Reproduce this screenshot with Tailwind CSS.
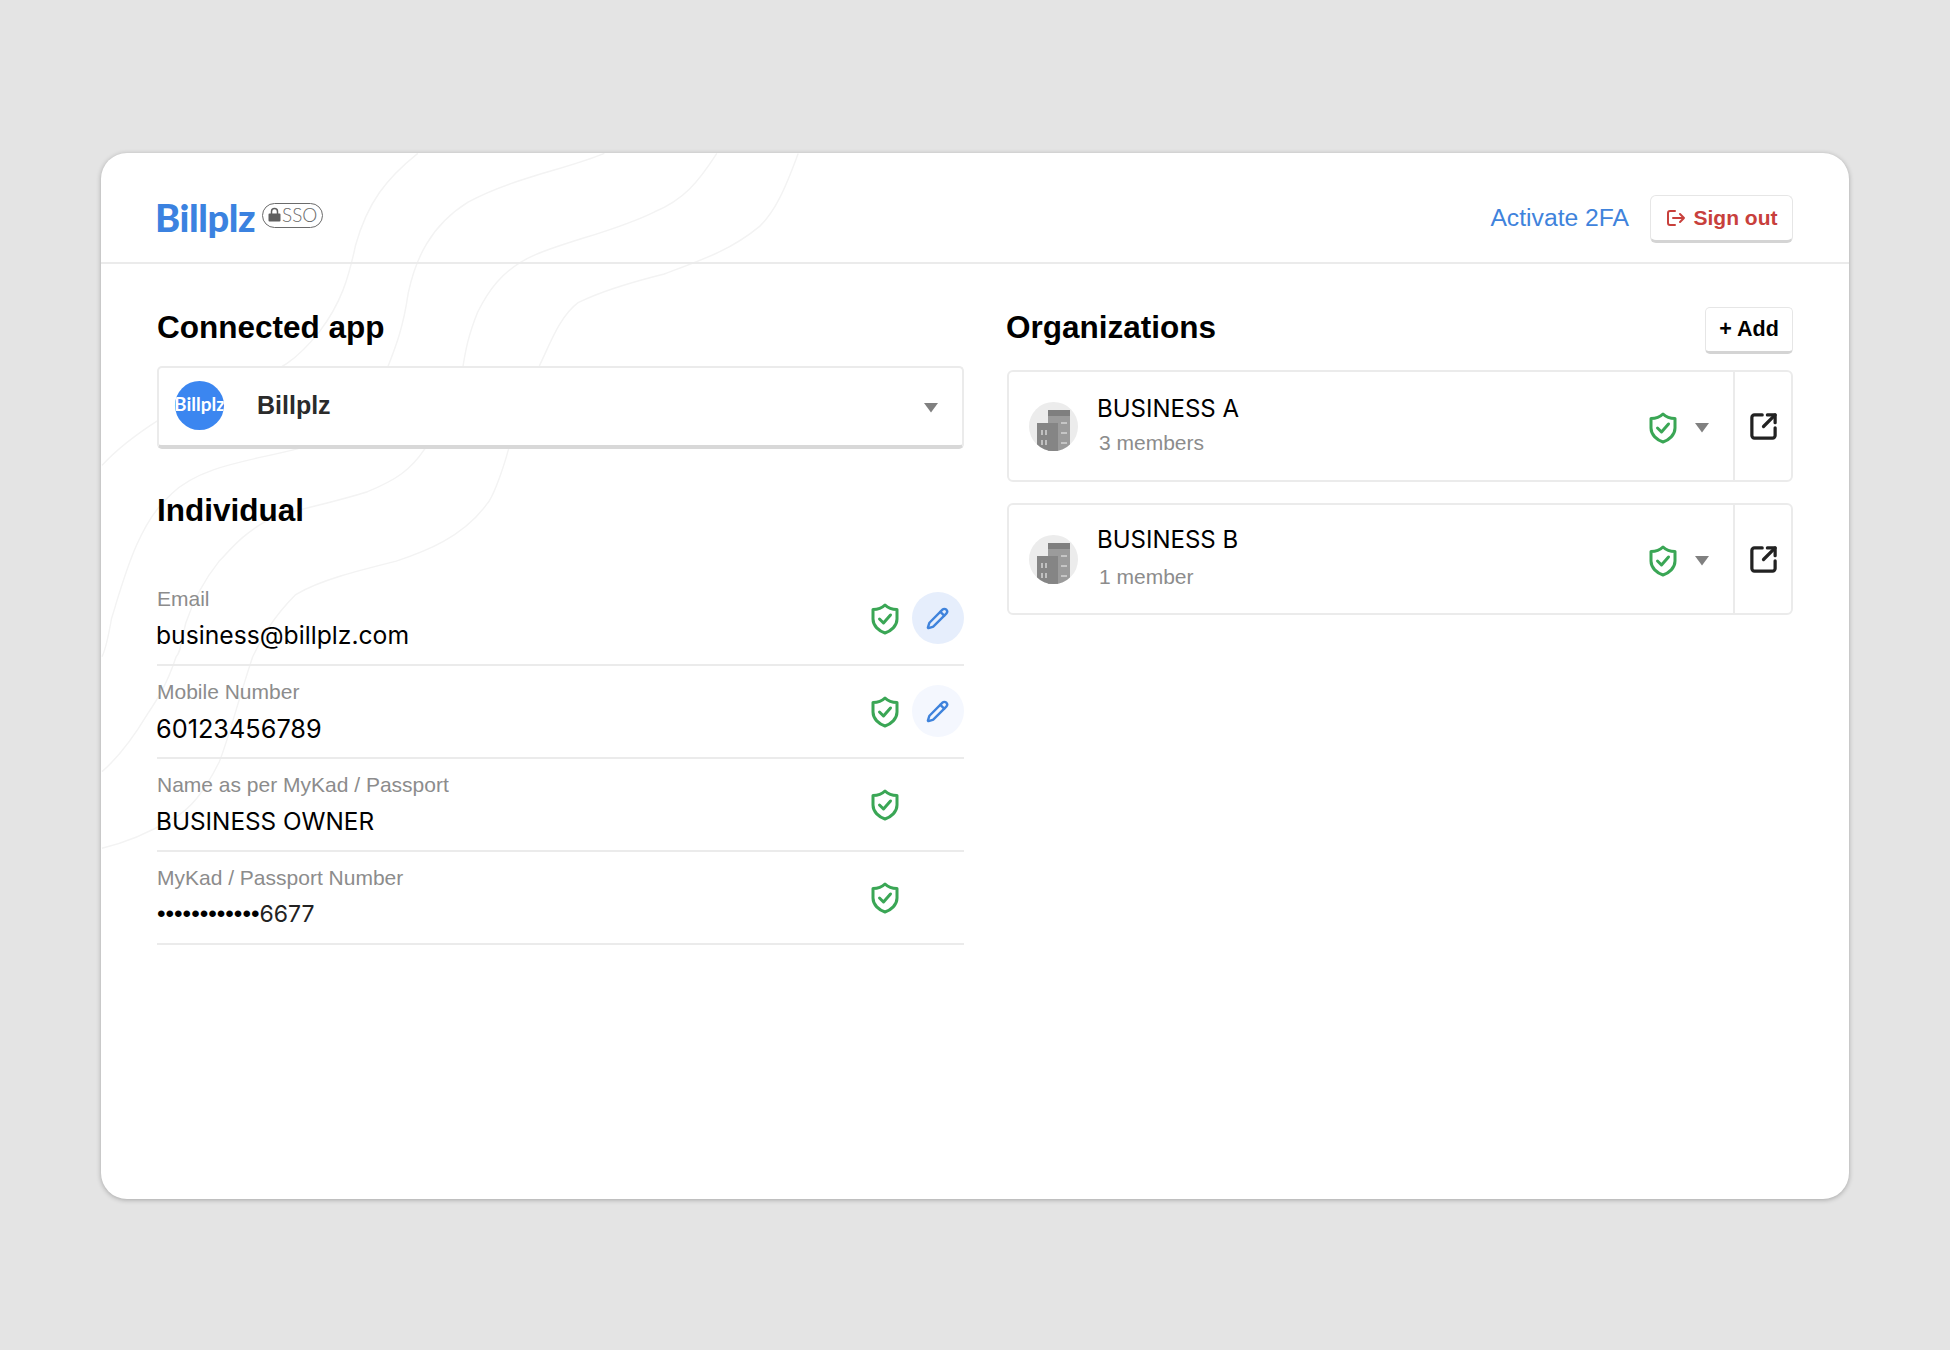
<!DOCTYPE html>
<html lang="en">
  <head>
    <meta charset="UTF-8" />
    <title>Billplz SSO</title>
    <script src="https://cdn.jsdelivr.net/npm/@tailwindcss/browser@4"></script>
  </head>
  <body class="bg-[#e4e4e4] h-[1350px] overflow-hidden font-['Liberation_Sans',Arial,sans-serif] text-black">
    <div class="pt-[153px] pl-[101px]">
      <div class="relative w-[1748px] h-[1046px] bg-white rounded-[26px] overflow-hidden shadow-[0_1px_5px_rgba(0,0,0,0.28)]">
        <!-- faint wavy background -->
        <svg class="absolute left-0 top-0" width="1748" height="1046" viewBox="0 0 1748 1046" fill="none">
          <g transform="translate(-11 -13) scale(0.4785)" stroke="#f3f3f3" stroke-width="3">
            <path d="M685 28C620 80 580 130 555 220C540 290 525 340 480 400C440 450 400 490 300 510C200 540 80 620 25 680" />
            <path d="M1075 28C1000 60 880 80 790 130C710 180 680 250 665 320C655 390 640 430 620 480C560 590 500 630 435 645C340 670 230 680 170 740C100 800 70 920 45 1000C38 1040 30 1070 25 1080" />
            <path d="M1310 28C1270 90 1240 125 1180 150C1100 190 1000 210 930 240C860 270 830 320 810 360C790 410 785 440 780 470C770 560 740 640 700 645C670 690 640 710 580 735C500 760 440 770 380 790C320 820 290 860 270 880C230 930 210 980 200 1010C190 1050 190 1070 180 1080C160 1140 140 1170 120 1200C90 1250 60 1290 25 1320" />
            <path d="M1480 28C1450 110 1430 150 1400 180C1340 230 1280 250 1200 280C1120 300 1060 320 1020 340C980 370 960 430 940 470C920 540 890 610 875 645C860 700 840 750 830 760C780 830 700 860 640 880C560 900 480 920 430 950C380 1000 360 1040 340 1080C310 1170 290 1250 270 1300C240 1360 210 1400 170 1420C120 1450 70 1470 25 1480" />
          </g>
        </svg>

        <!-- top bar -->
        <header class="relative h-[111px] border-b-2 border-[#ebebeb] pt-[22px] px-[56px] flex items-center justify-between">
          <div class="flex items-center gap-[7px] -mt-[4px] -ml-[2px]">
            <span class="font-['Lato',sans-serif] font-black text-[38px] leading-none text-[#3b82e0] tracking-[-0.4px]">Billplz</span>
            <span class="flex items-center gap-[1px] h-[25px] w-[61px] justify-center rounded-full border-[1.5px] border-[#6b6b6b] text-[#6b6b6b] font-['Lato',sans-serif] font-light text-[19px] -mt-[2px]">
              <svg class="-mt-[2px]" width="13" height="15" viewBox="0 0 13 15" fill="#5f5f5f"><path d="M1.5 6.5h10a1 1 0 0 1 1 1v6a1 1 0 0 1-1 1h-10a1 1 0 0 1-1-1v-6a1 1 0 0 1 1-1z" /><path d="M3.5 7V4.500a3 3 0 0 1 6 0V7" fill="none" stroke="#5f5f5f" stroke-width="1.500" /></svg>
              SSO
            </span>
          </div>
          <div class="flex items-center gap-[21px]">
            <a class="text-[24.700px] leading-none text-[#3f83dc]">Activate 2FA</a>
            <button class="flex items-center gap-[8px] h-[48px] w-[143px] justify-center bg-white rounded-[6px] border border-[#e6e6e6] border-b-[3px] border-b-[#d4d4d4] text-[21px] font-bold text-[#c8403c]">
              <svg width="20" height="18" viewBox="0 0 20 18" fill="none" stroke="#c8403c" stroke-width="2" stroke-linecap="round" stroke-linejoin="round"><path d="M9 2H4a2 2 0 0 0-2 2v10a2 2 0 0 0 2 2h5" /><path d="M7 9h11M14 5l4 4-4 4" /></svg>
              Sign out
            </button>
          </div>
        </header>

        <main class="relative px-[56px] flex gap-[43px]">
          <!-- left column -->
          <section class="w-[807px]">
            <h2 class="text-[31.500px] leading-[36px] font-bold mt-[45px]">Connected app</h2>
            <div class="mt-[21px] h-[83px] bg-white rounded-[5px] border-2 border-[#ebebeb] border-b-[4px] border-b-[#d8d8d8] flex items-center pl-[16px] pr-[24px]">
              <div class="w-[49px] h-[49px] -mt-[2px] rounded-full bg-[#3b86f0] overflow-hidden flex items-center justify-center shrink-0">
                <span class="font-['Lato',sans-serif] font-bold text-white text-[19px] leading-none whitespace-nowrap -mt-[4px]">Billplz</span>
              </div>
              <span class="ml-[33px] -mt-[1px] text-[25px] font-bold text-[#2b2b2b]">Billplz</span>
              <svg class="ml-auto mt-[2px]" width="14" height="10" viewBox="0 0 14 10" fill="#808080"><path d="M0 0h14L7 9.500z" /></svg>
            </div>
            <h2 class="text-[31.500px] leading-[36px] font-bold mt-[43px]">Individual</h2>

            <div class="mt-[45px]">
              <div class="h-[93px] border-b-2 border-[#ebebeb] flex items-center">
                <div class="flex-1">
                  <div class="text-[21px] leading-[24px] text-[#8c8c8c]">Email</div>
                  <div class="mt-[9px] -ml-[1px] font-['Inter',sans-serif] text-[24.700px] leading-[30px]">business@billplz.com</div>
                </div>
                <svg class="mt-[1px]" width="28" height="32" viewBox="0 0 28 32" fill="none" stroke="#3aa655" stroke-width="3" stroke-linecap="round" stroke-linejoin="round"><path d="M14 2C17 5 21 6.500 26 6.500V16C26 23 20 28 14 30C8 28 2 23 2 16V6.500C7 6.500 11 5 14 2Z" /><path d="M8.500 16l4 4 7-8" /></svg>
                <div class="ml-[13px] -mt-[1px] w-[52px] h-[52px] rounded-full bg-[#e6eefc] flex items-center justify-center">
                  <svg class="-ml-[1px]" width="23" height="23" viewBox="0 0 24 24" fill="none" stroke="#3f83dc" stroke-width="2.500" stroke-linecap="round" stroke-linejoin="round"><path d="M21.174 6.812a1 1 0 0 0-3.986-3.987L3.842 16.174a2 2 0 0 0-.5.83l-1.321 4.352a.5.5 0 0 0 .623.622l4.353-1.32a2 2 0 0 0 .83-.497z" /><path d="m15 5 4 4" /></svg>
                </div>
              </div>
              <div class="h-[93px] border-b-2 border-[#ebebeb] flex items-center">
                <div class="flex-1">
                  <div class="text-[21px] leading-[24px] text-[#8c8c8c]">Mobile Number</div>
                  <div class="mt-[10px] -ml-[1px] font-['Inter',sans-serif] text-[25.300px] leading-[30px]">60123456789</div>
                </div>
                <svg class="mt-[1px]" width="28" height="32" viewBox="0 0 28 32" fill="none" stroke="#3aa655" stroke-width="3" stroke-linecap="round" stroke-linejoin="round"><path d="M14 2C17 5 21 6.500 26 6.500V16C26 23 20 28 14 30C8 28 2 23 2 16V6.500C7 6.500 11 5 14 2Z" /><path d="M8.500 16l4 4 7-8" /></svg>
                <div class="ml-[13px] -mt-[1px] w-[52px] h-[52px] rounded-full bg-[#f4f7fe] flex items-center justify-center">
                  <svg class="-ml-[1px]" width="23" height="23" viewBox="0 0 24 24" fill="none" stroke="#3f83dc" stroke-width="2.500" stroke-linecap="round" stroke-linejoin="round"><path d="M21.174 6.812a1 1 0 0 0-3.986-3.987L3.842 16.174a2 2 0 0 0-.5.83l-1.321 4.352a.5.5 0 0 0 .623.622l4.353-1.32a2 2 0 0 0 .83-.497z" /><path d="m15 5 4 4" /></svg>
                </div>
              </div>
              <div class="h-[93px] border-b-2 border-[#ebebeb] flex items-center">
                <div class="flex-1">
                  <div class="text-[21px] leading-[24px] text-[#8c8c8c]">Name as per MyKad / Passport</div>
                  <div class="mt-[9px] -ml-[1px] font-['Inter',sans-serif] text-[24.300px] leading-[30px]">BUSINESS OWNER</div>
                </div>
                <svg class="mr-[65px] mt-[1px]" width="28" height="32" viewBox="0 0 28 32" fill="none" stroke="#3aa655" stroke-width="3" stroke-linecap="round" stroke-linejoin="round"><path d="M14 2C17 5 21 6.500 26 6.500V16C26 23 20 28 14 30C8 28 2 23 2 16V6.500C7 6.500 11 5 14 2Z" /><path d="M8.500 16l4 4 7-8" /></svg>
              </div>
              <div class="h-[93px] border-b-2 border-[#ebebeb] flex items-center">
                <div class="flex-1">
                  <div class="text-[21px] leading-[24px] text-[#8c8c8c]">MyKad / Passport Number</div>
                  <div class="mt-[9px] text-[24.400px] leading-[30px]">••••••••••••<span class="font-['Inter',sans-serif] text-[23px] text-[#222]">6677</span></div>
                </div>
                <svg class="mr-[65px] mt-[1px]" width="28" height="32" viewBox="0 0 28 32" fill="none" stroke="#3aa655" stroke-width="3" stroke-linecap="round" stroke-linejoin="round"><path d="M14 2C17 5 21 6.500 26 6.500V16C26 23 20 28 14 30C8 28 2 23 2 16V6.500C7 6.500 11 5 14 2Z" /><path d="M8.500 16l4 4 7-8" /></svg>
              </div>
            </div>
          </section>

          <!-- right column -->
          <section class="w-[786px]">
            <div class="flex items-start justify-between mt-[43px]">
              <h2 class="text-[31.500px] leading-[36px] font-bold mt-[2px] -ml-[1px]">Organizations</h2>
              <button class="h-[47px] w-[88px] bg-white rounded-[5px] border border-[#e6e6e6] border-b-[3px] border-b-[#d4d4d4] text-[21.500px] font-bold">+ Add</button>
            </div>
            <div class="mt-[16px] flex flex-col gap-[21px]">
              <div class="h-[112px] bg-white rounded-[6px] border-2 border-[#ebebeb] flex">
                <div class="flex-1 flex items-center pl-[20px] pr-[24px]">
                  <svg class="shrink-0" width="49" height="49" viewBox="0 0 49 49"><clipPath id="c1"><circle cx="24.500" cy="24.500" r="24.500" /></clipPath><g clip-path="url(#c1)"><rect width="49" height="49" fill="#ececec" /><rect x="19" y="8" width="22" height="41" fill="#9b9b9b" /><rect x="19" y="8" width="22" height="6" fill="#7f7f7f" /><rect x="8" y="21" width="21" height="28" fill="#858585" /><path d="M13 28v5M17 28v5M13 38v5M17 38v5M32 21h6M32 31h6M32 41h6" stroke="#d4d4d4" stroke-width="1.500" /></g></svg>
                  <div class="ml-[19px] flex-1 -mt-[3px]">
                    <div class="font-['Inter',sans-serif] text-[24px] leading-[30px]">BUSINESS A</div>
                    <div class="mt-[6px] ml-[2px] text-[21px] leading-[26px] text-[#8c8c8c]">3 members</div>
                  </div>
                  <svg class="mt-[4px]" width="28" height="32" viewBox="0 0 28 32" fill="none" stroke="#3aa655" stroke-width="3" stroke-linecap="round" stroke-linejoin="round"><path d="M14 2C17 5 21 6.500 26 6.500V16C26 23 20 28 14 30C8 28 2 23 2 16V6.500C7 6.500 11 5 14 2Z" /><path d="M8.500 16l4 4 7-8" /></svg>
                  <svg class="ml-[18px] mt-[4px]" width="14" height="10" viewBox="0 0 14 10" fill="#808080"><path d="M0 0h14L7 9.500z" /></svg>
                </div>
                <div class="w-[58px] border-l-2 border-[#ebebeb] flex items-center justify-center">
                  <svg class="mt-[1px]" width="31" height="31" viewBox="0 0 24 24" fill="none" stroke="#222" stroke-width="2.500" stroke-linecap="round" stroke-linejoin="round"><path d="M21 13v6a2 2 0 0 1-2 2H5a2 2 0 0 1-2-2V5a2 2 0 0 1 2-2h6" /><path d="m21 3-9 9" /><path d="M15 3h6v6" /></svg>
                </div>
              </div>
              <div class="h-[112px] bg-white rounded-[6px] border-2 border-[#ebebeb] flex">
                <div class="flex-1 flex items-center pl-[20px] pr-[24px]">
                  <svg class="shrink-0" width="49" height="49" viewBox="0 0 49 49"><clipPath id="c2"><circle cx="24.500" cy="24.500" r="24.500" /></clipPath><g clip-path="url(#c2)"><rect width="49" height="49" fill="#ececec" /><rect x="19" y="8" width="22" height="41" fill="#9b9b9b" /><rect x="19" y="8" width="22" height="6" fill="#7f7f7f" /><rect x="8" y="21" width="21" height="28" fill="#858585" /><path d="M13 28v5M17 28v5M13 38v5M17 38v5M32 21h6M32 31h6M32 41h6" stroke="#d4d4d4" stroke-width="1.500" /></g></svg>
                  <div class="ml-[19px] flex-1 -mt-[3px]">
                    <div class="font-['Inter',sans-serif] text-[24px] leading-[30px]">BUSINESS B</div>
                    <div class="mt-[9px] ml-[2px] text-[21px] leading-[26px] text-[#8c8c8c]">1 member</div>
                  </div>
                  <svg class="mt-[4px]" width="28" height="32" viewBox="0 0 28 32" fill="none" stroke="#3aa655" stroke-width="3" stroke-linecap="round" stroke-linejoin="round"><path d="M14 2C17 5 21 6.500 26 6.500V16C26 23 20 28 14 30C8 28 2 23 2 16V6.500C7 6.500 11 5 14 2Z" /><path d="M8.500 16l4 4 7-8" /></svg>
                  <svg class="ml-[18px] mt-[4px]" width="14" height="10" viewBox="0 0 14 10" fill="#808080"><path d="M0 0h14L7 9.500z" /></svg>
                </div>
                <div class="w-[58px] border-l-2 border-[#ebebeb] flex items-center justify-center">
                  <svg class="mt-[1px]" width="31" height="31" viewBox="0 0 24 24" fill="none" stroke="#222" stroke-width="2.500" stroke-linecap="round" stroke-linejoin="round"><path d="M21 13v6a2 2 0 0 1-2 2H5a2 2 0 0 1-2-2V5a2 2 0 0 1 2-2h6" /><path d="m21 3-9 9" /><path d="M15 3h6v6" /></svg>
                </div>
              </div>
            </div>
          </section>
        </main>
      </div>
    </div>
  </body>
</html>
